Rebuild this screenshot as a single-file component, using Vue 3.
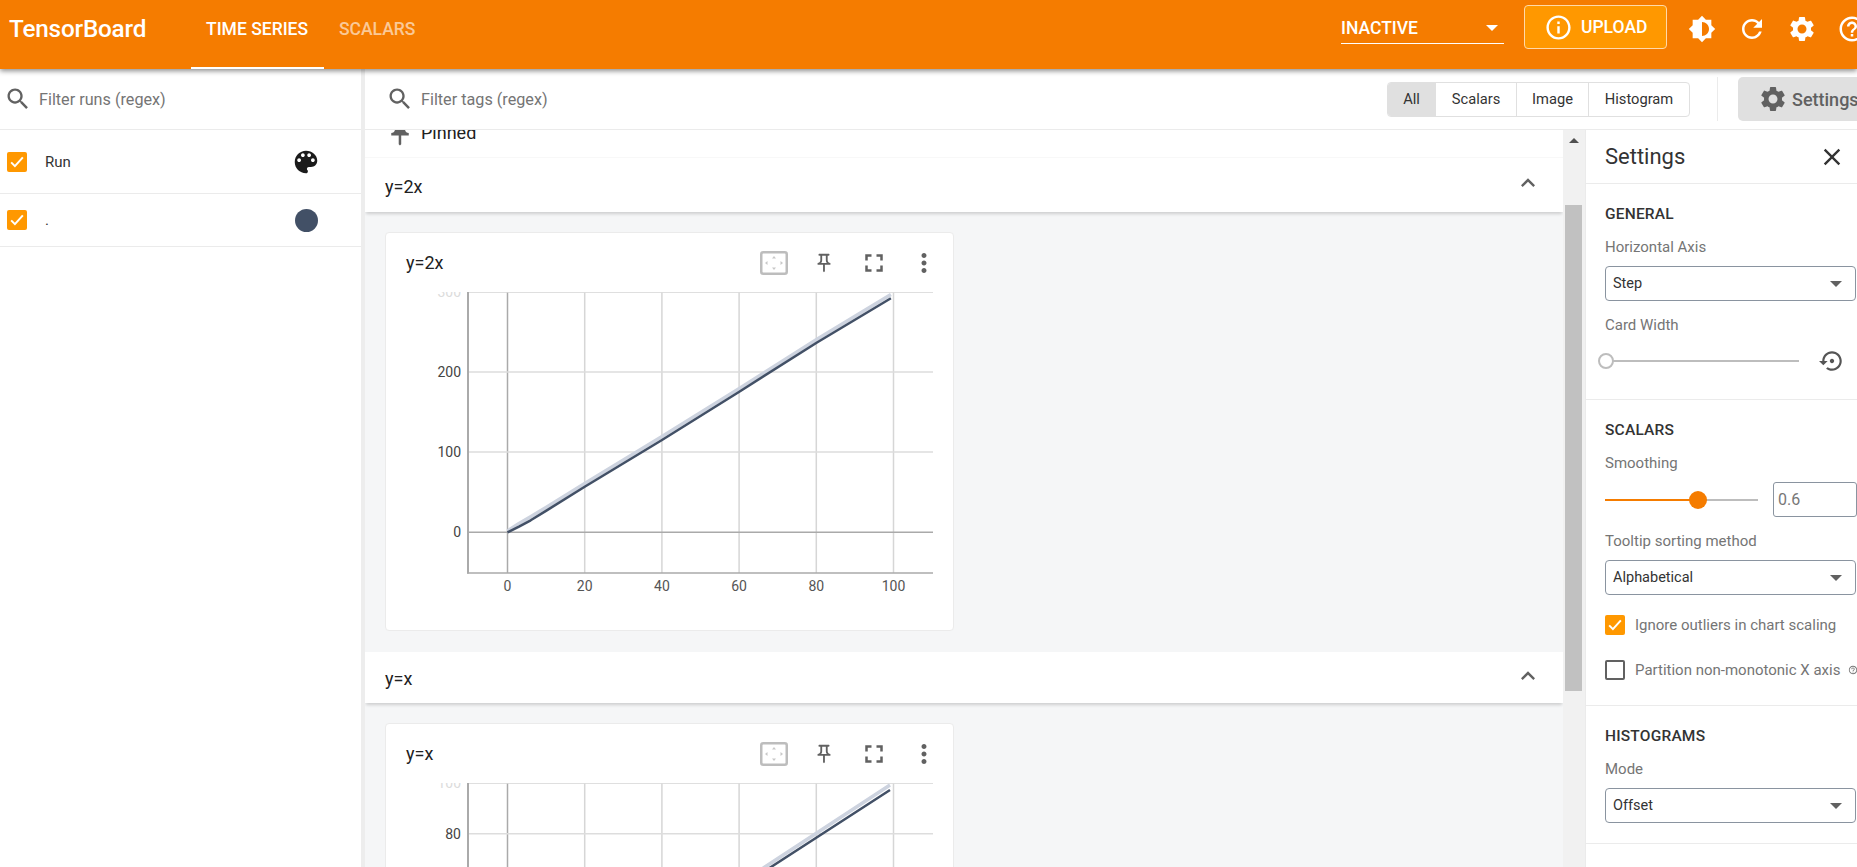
<script setup>
const icons = {
  search: 'M15.5 14h-.79l-.28-.27C15.41 12.59 16 11.11 16 9.5 16 5.91 13.09 3 9.5 3S3 5.91 3 9.5 5.91 16 9.5 16c1.61 0 3.09-.59 4.23-1.57l.27.28v.79l5 4.99L20.49 19l-4.99-5zm-6 0C7.01 14 5 11.99 5 9.5S7.01 5 9.5 5 14 7.01 14 9.5 11.99 14 9.5 14z',
  info: 'M11 7h2v2h-2zm0 4h2v6h-2zm1-9C6.48 2 2 6.48 2 12s4.48 10 10 10 10-4.48 10-10S17.52 2 12 2zm0 18c-4.41 0-8-3.59-8-8s3.59-8 8-8 8 3.59 8 8-3.59 8-8 8z',
  brightness: 'M20 15.31L23.31 12 20 8.69V4h-4.69L12 .69 8.69 4H4v4.69L.69 12 4 15.31V20h4.69L12 23.31 15.31 20H20v-4.69zM12 18V6c3.31 0 6 2.69 6 6s-2.69 6-6 6z',
  refresh: 'M17.65 6.35C16.2 4.9 14.21 4 12 4c-4.42 0-7.99 3.58-7.99 8s3.57 8 7.99 8c3.73 0 6.84-2.55 7.73-6h-2.08c-.82 2.33-3.04 4-5.65 4-3.31 0-6-2.69-6-6s2.69-6 6-6c1.66 0 3.14.69 4.22 1.78L13 11h7V4l-2.35 2.35z',
  gear: 'M19.14 12.94c.04-.3.06-.61.06-.94 0-.32-.02-.64-.07-.94l2.03-1.58c.18-.14.23-.41.12-.61l-1.92-3.32c-.12-.22-.37-.29-.59-.22l-2.39.96c-.5-.38-1.03-.7-1.62-.94l-.36-2.54c-.04-.24-.24-.41-.48-.41h-3.84c-.24 0-.43.17-.47.41l-.36 2.54c-.59.24-1.13.57-1.62.94l-2.39-.96c-.22-.08-.47 0-.59.22L2.74 8.87c-.12.21-.08.47.12.61l2.03 1.58c-.05.3-.09.63-.09.94s.02.64.07.94l-2.03 1.58c-.18.14-.23.41-.12.61l1.92 3.32c.12.22.37.29.59.22l2.39-.96c.5.38 1.03.7 1.62.94l.36 2.54c.05.24.24.41.48.41h3.84c.24 0 .44-.17.47-.41l.36-2.54c.59-.24 1.13-.56 1.62-.94l2.39.96c.22.08.47 0 .59-.22l1.92-3.32c.12-.22.07-.47-.12-.61l-2.01-1.58zM12 15.6c-1.98 0-3.6-1.62-3.6-3.6s1.62-3.6 3.6-3.6 3.6 1.62 3.6 3.6-1.62 3.6-3.6 3.6z',
  help: 'M11 18h2v-2h-2v2zm1-16C6.48 2 2 6.48 2 12s4.48 10 10 10 10-4.48 10-10S17.52 2 12 2zm0 18c-4.41 0-8-3.59-8-8s3.59-8 8-8 8 3.59 8 8-3.59 8-8 8zm0-14c-2.21 0-4 1.79-4 4h2c0-1.1.9-2 2-2s2 .9 2 2c0 2-3 1.75-3 5h2c0-2.25 3-2.5 3-5 0-2.21-1.79-4-4-4z',
  palette: 'M12 3c-4.97 0-9 4.03-9 9s4.03 9 9 9c.83 0 1.5-.67 1.5-1.5 0-.39-.15-.74-.39-1.01-.23-.26-.38-.61-.38-.99 0-.83.67-1.5 1.5-1.5H16c2.76 0 5-2.24 5-5 0-4.42-4.03-8-9-8zm-5.5 9c-.83 0-1.5-.67-1.5-1.5S5.67 9 6.5 9 8 9.67 8 10.5 7.33 12 6.5 12zm3-4C8.67 8 8 7.33 8 6.5S8.67 5 9.5 5s1.5.67 1.5 1.5S10.33 8 9.5 8zm5 0c-.83 0-1.5-.67-1.5-1.5S13.67 5 14.5 5s1.5.67 1.5 1.5S15.33 8 14.5 8zm3 4c-.83 0-1.5-.67-1.5-1.5S16.67 9 17.5 9s1.5.67 1.5 1.5-.67 1.5-1.5 1.5z',
  close: 'M19 6.41L17.59 5 12 10.59 6.41 5 5 6.41 10.59 12 5 17.59 6.41 19 12 13.41 17.59 19 19 17.59 13.41 12z',
  up: 'M12 8l-6 6 1.41 1.41L12 10.83l4.59 4.58L18 14z',
  pin: 'M14,4v5c0,1.12,0.37,2.16,1,3H9c0.65-0.86,1-1.9,1-3V4H14 M17,2H7C6.45,2,6,2.45,6,3c0,0.55,0.45,1,1,1c0,0,0,0,0,0l1,0v5 c0,1.66-1.34,3-3,3v2h5.97v7l1,1l1-1v-7H19v-2c0,0,0,0,0,0c-1.66,0-3-1.34-3-3V4l1,0c0,0,0,0,0,0c0.55,0,1-0.45,1-1 C18,2.45,17.55,2,17,2L17,2z',
  pinFilled: 'M16,9V4l1,0c0.55,0,1-0.45,1-1v0c0-0.55-0.45-1-1-1H7C6.45,2,6,2.45,6,3v0 c0,0.55,0.45,1,1,1l1,0v5c0,1.66-1.34,3-3,3h0v2h5.97v7l1,1l1-1v-7H19v-2h0C17.34,12,16,10.66,16,9z',
  fullscreen: 'M7 14H5v5h5v-2H7v-3zm-2-4h2V7h3V5H5v5zm12 7h-3v2h5v-5h-2v3zM14 5v2h3v3h2V5h-5z',
  more: 'M12 8c1.1 0 2-.9 2-2s-.9-2-2-2-2 .9-2 2 .9 2 2 2zm0 2c-1.1 0-2 .9-2 2s.9 2 2 2 2-.9 2-2-.9-2-2-2zm0 6c-1.1 0-2 .9-2 2s.9 2 2 2 2-.9 2-2-.9-2-2-2z',
  restore: 'M14 12c0-1.1-.9-2-2-2s-2 .9-2 2 .9 2 2 2 2-.9 2-2zm-2-9c-4.97 0-9 4.03-9 9H0l4 4 4-4H5c0-3.87 3.13-7 7-7s7 3.13 7 7-3.13 7-7 7c-1.51 0-2.91-.49-4.06-1.3l-1.42 1.44C8.04 20.3 9.94 21 12 21c4.97 0 9-4.03 9-9s-4.03-9-9-9z',
}

const xTicks = [0, 20, 40, 60, 80, 100].map((label, i) => ({ label, x: 121.5 + 77.2 * i }))

const charts = [
  {
    title: 'y=2x',
    first: true,
    yTicks: [
      { label: 300, y: 0, faded: true },
      { label: 200, y: 80 },
      { label: 100, y: 160 },
      { label: 0, y: 240.3, zero: true },
    ],
    line: '121.5,240.3 133,234.6 144.7,228.3 160,218.9 198.7,194.7 276,148 353.3,99.7 430.6,50.7 504.9,6.3',
    ghost: '121.5,239 133,231.5 145,224.5 160,215.4 198.7,191.5 276,144.5 353.3,96.5 430.6,47.5 504.9,2.6',
  },
  {
    title: 'y=x',
    yTicks: [
      { label: 100, y: 0, faded: true },
      { label: 80, y: 50.7 },
      { label: 60, y: 101.4 },
      { label: 40, y: 152 },
      { label: 20, y: 203 },
      { label: 0, y: 254, zero: true },
    ],
    line: '121.5,255 133,249.3 145,242.500 160,232.700 199,206 385,84 504,7',
    ghost: '121.5,254 133,246.500 145,239 160,229 199,202.500 385,80 504,2',
  },
]
</script>

<template>
  <div class="page">
    <header class="topbar">
      <div class="top-left">
        <div class="logo">TensorBoard</div>
        <div class="tab active">TIME SERIES</div>
        <div class="tab">SCALARS</div>
      </div>
      <div class="top-right">
        <div class="run-select">
          <span>INACTIVE</span>
          <i class="caret white"></i>
        </div>
        <div class="upload">
          <svg class="ic-29" viewBox="0 0 24 24"><path :d="icons.info" /></svg>
          <span>UPLOAD</span>
        </div>
        <div class="top-icon"><svg class="ic-28" viewBox="0 0 24 24"><path :d="icons.brightness" /></svg></div>
        <div class="top-icon"><svg class="ic-30" viewBox="0 0 24 24"><path :d="icons.refresh" /></svg></div>
        <div class="top-icon"><svg class="ic-30" viewBox="0 0 24 24"><path :d="icons.gear" /></svg></div>
        <div class="top-icon"><svg class="ic-30" viewBox="0 0 24 24"><path :d="icons.help" /></svg></div>
      </div>
    </header>

    <div class="body">
      <aside class="runs">
        <div class="filter">
          <svg class="ic-28 grey" viewBox="0 0 24 24"><path :d="icons.search" /></svg>
          <input class="filter-input" placeholder="Filter runs (regex)" />
        </div>
        <div class="run-row run-first">
          <span class="check on"><svg viewBox="0 0 24 24"><path d="M5 12.5l4.5 4.5L19 6.5" /></svg></span>
          <span class="run-name">Run</span>
          <svg class="palette" viewBox="0 0 24 24"><path :d="icons.palette" /></svg>
        </div>
        <div class="run-row run-second">
          <span class="check on"><svg viewBox="0 0 24 24"><path d="M5 12.5l4.5 4.5L19 6.5" /></svg></span>
          <span class="run-name">.</span>
          <span class="run-dot"></span>
        </div>
      </aside>
      <div class="resizer"></div>

      <main class="main">
        <div class="toolbar">
          <div class="filter tags">
            <svg class="ic-28 grey" viewBox="0 0 24 24"><path :d="icons.search" /></svg>
            <input class="filter-input" placeholder="Filter tags (regex)" />
          </div>
          <div class="type-group">
            <div class="type-btn on">All</div>
            <div class="type-btn w-scalars">Scalars</div>
            <div class="type-btn w-image">Image</div>
            <div class="type-btn w-hist">Histogram</div>
          </div>
          <div class="tool-sep"></div>
          <div class="settings-btn">
            <svg class="ic-30" viewBox="0 0 24 24"><path :d="icons.gear" /></svg>
            <span>Settings</span>
          </div>
        </div>

        <div class="workspace">
          <div class="content">
            <div class="pinned">
              <svg class="ic-30 grey" viewBox="0 0 24 24"><path :d="icons.pinFilled" /></svg>
              <span>Pinned</span>
            </div>

            <template v-for="chart in charts" :key="chart.title">
              <div class="group-head" :class="{ tall: chart.first }">
                <span>{{ chart.title }}</span>
                <svg class="ic-28 grey" viewBox="0 0 24 24"><path :d="icons.up" /></svg>
              </div>
              <div class="card">
                <div class="card-head">
                  <span class="card-title">{{ chart.title }}</span>
                  <div class="card-tools">
                    <div class="tool">
                      <svg class="fit" width="28" height="24" viewBox="0 0 28 24">
                        <rect x="1.250" y="1.250" width="25.500" height="21.500" rx="2" fill="none" stroke="#bdbdbd" stroke-width="2.500" />
                        <path d="M14 5l-2 2.500h4zM14 19l-2-2.500h4zM5 12l2.500-2v4zM23 12l-2.500-2v4z" fill="#c8c8c8" />
                      </svg>
                    </div>
                    <div class="tool"><svg class="ic-22 grey" viewBox="0 0 24 24"><path :d="icons.pin" /></svg></div>
                    <div class="tool"><svg class="ic-30 grey" viewBox="0 0 24 24"><path :d="icons.fullscreen" /></svg></div>
                    <div class="tool"><svg class="ic-30 grey" viewBox="0 0 24 24"><path :d="icons.more" /></svg></div>
                  </div>
                </div>
                <svg class="plot" width="567" height="338" viewBox="0 0 567 338">
                  <line x1="82" y1="0" x2="547" y2="0" stroke="#ddd" stroke-width="1.500" />
                  <line v-for="t in xTicks" :key="t.label" :x1="t.x" y1="0" :x2="t.x" y2="281"
                    :stroke="t.label === 0 ? '#aaa' : '#d6d6d6'" stroke-width="1.500" />
                  <line v-for="t in chart.yTicks" :key="t.label" x1="82" :y1="t.y" x2="547" :y2="t.y"
                    :stroke="t.zero ? '#aaa' : '#ddd'" stroke-width="1.500" />
                  <line x1="82" y1="0" x2="82" y2="281.500" stroke="#aaa" stroke-width="2" />
                  <line x1="81" y1="281" x2="547" y2="281" stroke="#aaa" stroke-width="1.500" />
                  <text v-for="t in chart.yTicks" :key="t.label" class="tick" x="75" :y="t.y + 5" text-anchor="end"
                    :fill="t.faded ? '#dcdcdc' : '#444'">{{ t.label }}</text>
                  <text v-for="t in xTicks" :key="t.label" class="tick" :x="t.x" y="299" text-anchor="middle" fill="#555">{{ t.label }}</text>
                  <polyline :points="chart.ghost" fill="none" stroke="#cdd3df" stroke-width="3.500" stroke-linejoin="round" />
                  <polyline :points="chart.line" fill="none" stroke="#425066" stroke-width="2.500" stroke-linejoin="round" />
                </svg>
              </div>
            </template>
          </div>

          <div class="scrollbar">
            <i class="scroll-up"></i>
            <div class="thumb"></div>
          </div>

          <section class="settings">
            <div class="settings-head">
              <span>Settings</span>
              <svg class="ic-28" viewBox="0 0 24 24"><path :d="icons.close" /></svg>
            </div>

            <div class="block">
              <h3>GENERAL</h3>
              <div class="field-label">Horizontal Axis</div>
              <div class="select"><span>Step</span><i class="caret"></i></div>
              <div class="field-label">Card Width</div>
              <div class="slider-row wide">
                <div class="slider">
                  <i class="knob"></i>
                </div>
                <svg class="restore" viewBox="0 0 24 24"><path :d="icons.restore" /></svg>
              </div>
            </div>

            <div class="block">
              <h3>SCALARS</h3>
              <div class="field-label">Smoothing</div>
              <div class="smooth-row">
                <div class="slider short">
                  <i class="fill"></i>
                  <i class="knob solid"></i>
                </div>
                <input class="smooth-input" value="0.6" />
              </div>
              <div class="field-label">Tooltip sorting method</div>
              <div class="select"><span>Alphabetical</span><i class="caret"></i></div>
              <div class="check-row top">
                <span class="check on"><svg viewBox="0 0 24 24"><path d="M5 12.5l4.5 4.5L19 6.5" /></svg></span>
                <span>Ignore outliers in chart scaling</span>
              </div>
              <div class="check-row next">
                <span class="check"></span>
                <span>Partition non-monotonic X axis</span>
                <svg class="mini-help" viewBox="0 0 24 24"><path :d="icons.help" /></svg>
              </div>
            </div>

            <div class="block last">
              <h3>HISTOGRAMS</h3>
              <div class="field-label">Mode</div>
              <div class="select"><span>Offset</span><i class="caret"></i></div>
            </div>
          </section>
        </div>
      </main>
    </div>
  </div>
</template>

<style scoped>
.page {
  height: 867px;
  overflow: hidden;
  display: flex;
  flex-direction: column;
  font-family: Roboto, "Liberation Sans", sans-serif;
  color: #212121;
  background: #fff;
}

svg { display: block; fill: currentColor; flex: none; }
.ic-22 { width: 22px; height: 22px; }
.ic-28 { width: 28px; height: 28px; }
.ic-29 { width: 29px; height: 29px; }
.ic-30 { width: 30px; height: 30px; }
.grey { color: #616161; }

.topbar {
  height: 69px;
  flex: none;
  display: flex;
  overflow: hidden;
  background: #f57c00;
  color: #fff;
  position: relative;
  z-index: 2;
  box-shadow: 0 2px 5px rgba(0, 0, 0, 0.45);
}
.top-left { width: 1341px; flex: none; display: flex; }
.logo {
  width: 191px;
  padding-left: 9px;
  font-size: 24.300px;
  font-weight: 500;
  line-height: 58px;
  box-sizing: border-box;
  letter-spacing: -0.2px;
  flex: none;
}
.tab {
  padding: 0 15px;
  height: 69px;
  line-height: 58px;
  box-sizing: border-box;
  font-size: 17.500px;
  font-weight: 500;
  white-space: nowrap;
  color: rgba(255, 255, 255, 0.6);
  border-bottom: 2px solid transparent;
}
.tab.active { color: #fff; border-bottom-color: #fff; width: 133px; }

.top-right { display: flex; align-items: center; height: 58px; flex: none; }
.run-select {
  width: 163px;
  height: 32px;
  margin-top: -2px;
  box-sizing: border-box;
  border-bottom: 1px solid #fff;
  display: flex;
  align-items: center;
  justify-content: space-between;
  padding-right: 6px;
  font-size: 17.500px;
  font-weight: 500;
}
.caret {
  width: 0;
  height: 0;
  border-left: 6px solid transparent;
  border-right: 6px solid transparent;
  border-top: 6px solid #616161;
}
.caret.white { border-top-color: #fff; }
.upload {
  width: 143px;
  height: 44px;
  margin: -4px 10px 0 20px;
  box-sizing: border-box;
  flex: none;
  background: #ff9800;
  border: 1px solid #ffd9a8;
  border-radius: 4px;
  display: flex;
  align-items: center;
  gap: 8px;
  padding-left: 19px;
  font-size: 17.500px;
  font-weight: 500;
}
.top-icon { width: 50px; flex: none; display: flex; justify-content: center; }

.body { flex: 1; display: flex; min-height: 0; }
.runs { width: 361px; flex: none; background: #fff; }
.resizer { width: 4px; flex: none; background: #ededed; }
.filter {
  height: 60px;
  box-sizing: content-box;
  border-bottom: 1px solid #ebebeb;
  display: flex;
  align-items: center;
  gap: 7px;
  padding-left: 4px;
}
.filter-input {
  border: 0;
  outline: 0;
  padding: 0;
  font: 16.200px Roboto, sans-serif;
  color: #212121;
  width: 240px;
  background: transparent;
}
.filter-input::placeholder { color: #757575; opacity: 1; }

.run-row {
  display: flex;
  align-items: center;
  border-bottom: 1px solid #ebebeb;
  padding-left: 7px;
  box-sizing: border-box;
}
.run-first { height: 64px; }
.run-second { height: 53px; }
.run-name { margin-left: 18px; width: 240px; font-size: 15px; color: #333; }
.palette { width: 30px; height: 30px; margin-left: 6px; color: #1b1b1b; }
.run-dot { width: 23px; height: 23px; border-radius: 50%; background: #425066; margin-left: 10px; }

.check {
  width: 20px;
  height: 20px;
  box-sizing: border-box;
  flex: none;
  border: 2px solid #616161;
  border-radius: 2px;
  display: block;
}
.check.on { background: #ff9800; border: 0; }
.check svg { width: 20px; height: 20px; fill: none; stroke: #fff; stroke-width: 2.400; }

.main { flex: 1; min-width: 0; display: flex; flex-direction: column; }
.toolbar {
  height: 60px;
  flex: none;
  border-bottom: 1px solid #ebebeb;
  display: flex;
  align-items: center;
  overflow: hidden;
}
.filter.tags { width: 1022px; flex: none; border: 0; padding-left: 21px; box-sizing: border-box; }
.type-group {
  display: flex;
  flex: none;
  height: 35px;
  border: 1px solid #e0e0e0;
  border-radius: 4px;
  box-sizing: border-box;
  overflow: hidden;
  font-size: 14.700px;
  color: #333;
}
.type-btn {
  width: 47px;
  display: flex;
  align-items: center;
  justify-content: center;
  border-right: 1px solid #e0e0e0;
  margin-top: -2px;
  padding-top: 2px;
}
.type-btn.on { background: #e0e0e0; }
.type-btn.w-scalars { width: 80px; }
.type-btn.w-image { width: 71px; }
.type-btn.w-hist { width: 100px; border-right: 0; }
.tool-sep { width: 1px; height: 44px; background: #ebebeb; margin: 0 20px 0 27px; flex: none; }
.settings-btn {
  width: 150px;
  height: 44px;
  flex: none;
  background: #e0e0e0;
  border-radius: 5px;
  display: flex;
  align-items: center;
  gap: 4px;
  padding-left: 20px;
  box-sizing: border-box;
  font-size: 18px;
  font-weight: 500;
  color: #616161;
}

.workspace { flex: 1; min-height: 0; display: flex; }
.content { width: 1198px; flex: none; background: #f5f6f7; overflow: hidden; }
.pinned {
  height: 60px;
  margin-top: -32px;
  padding: 10px 0 0 20px;
  box-sizing: border-box;
  background: #fff;
  border-bottom: 1px solid #f8f8f8;
  display: flex;
  align-items: center;
  gap: 6px;
  font-size: 18px;
}
.group-head {
  height: 51px;
  background: #fff;
  box-shadow: 0 3px 3px -1px rgba(0, 0, 0, 0.16);
  display: flex;
  align-items: center;
  justify-content: space-between;
  padding: 0 21px 0 20px;
  font-size: 18px;
  position: relative;
}
.group-head.tall { height: 54px; }
.group-head span { padding-top: 2px; }
.group-head svg { margin-bottom: 4px; }

.card {
  width: 569px;
  height: 399px;
  box-sizing: border-box;
  margin: 20px 0 21px 20px;
  background: #fff;
  border: 1px solid #ebebeb;
  border-radius: 4px;
}
.card-head { height: 59px; display: flex; align-items: center; justify-content: space-between; padding-right: 4px; }
.card-title { padding-left: 20px; font-size: 18px; }
.card-tools { display: flex; }
.tool { width: 50px; display: flex; justify-content: center; align-items: center; }
.tick { font: 14px Roboto, sans-serif; }

.scrollbar {
  width: 22px;
  flex: none;
  background: #f1f1f1;
  padding: 8px 3px 0 2px;
  box-sizing: border-box;
  display: flex;
  flex-direction: column;
  align-items: center;
}
.scroll-up {
  width: 0;
  height: 0;
  border-left: 5px solid transparent;
  border-right: 5px solid transparent;
  border-bottom: 5px solid #505050;
}
.thumb { width: 17px; height: 486px; margin-top: 62px; background: #c1c1c1; flex: none; }

.settings { flex: 1; min-width: 0; border-left: 1px solid #ebebeb; }
.settings-head {
  height: 53px;
  border-bottom: 1px solid #ebebeb;
  display: flex;
  align-items: center;
  justify-content: space-between;
  padding: 0 11px 0 19px;
  font-size: 22px;
  color: #333;
}
.block { padding: 20px 1px 25px 19px; border-bottom: 1px solid #ebebeb; }
.block.last { padding-bottom: 20px; }
h3 { margin: 0; font-size: 15.500px; font-weight: 500; line-height: 20px; letter-spacing: 0.2px; color: #333; }
.field-label { margin: 15px 0 10px; font-size: 15px; line-height: 18px; color: #757575; }
h3 + .field-label { margin-top: 14px; }
.select {
  height: 35px;
  box-sizing: border-box;
  border: 1px solid #8a94a0;
  border-radius: 4px;
  display: flex;
  align-items: center;
  justify-content: space-between;
  padding: 0 13px 0 7px;
  font-size: 14.500px;
  color: #333;
}
.slider-row { display: flex; align-items: center; height: 26px; margin-top: 14px; }
.slider { position: relative; height: 2px; background: #bdbdbd; flex: none; }
.slider-row .slider { width: 194px; }
.slider.short { width: 153px; }
.knob {
  position: absolute;
  left: -7px;
  top: -7px;
  width: 16px;
  height: 16px;
  box-sizing: border-box;
  background: #fff;
  border: 2px solid #bdbdbd;
  border-radius: 50%;
}
.knob.solid { left: 84px; top: -8px; width: 18px; height: 18px; border: 0; background: #f57c00; }
.fill { position: absolute; left: 0; top: 0; width: 93px; height: 2px; background: #f57c00; }
.restore { width: 26px; height: 26px; margin-left: 20px; color: #555; }
.smooth-row { display: flex; align-items: center; }
.smooth-input {
  width: 84px;
  height: 35px;
  margin-left: 15px;
  box-sizing: border-box;
  border: 1px solid #8a94a0;
  border-radius: 3px;
  padding: 0 0 0 4px;
  font: 16px Roboto, sans-serif;
  color: #777;
  outline: 0;
}
.check-row { display: flex; align-items: center; gap: 10px; height: 20px; font-size: 15px; color: #757575; white-space: nowrap; }
.check-row.top { margin-top: 20px; }
.check-row.next { margin-top: 25px; }
.mini-help { width: 10px; height: 10px; margin-left: -2px; color: #757575; }
</style>

<style>
html, body { margin: 0; overflow: hidden; }
</style>
